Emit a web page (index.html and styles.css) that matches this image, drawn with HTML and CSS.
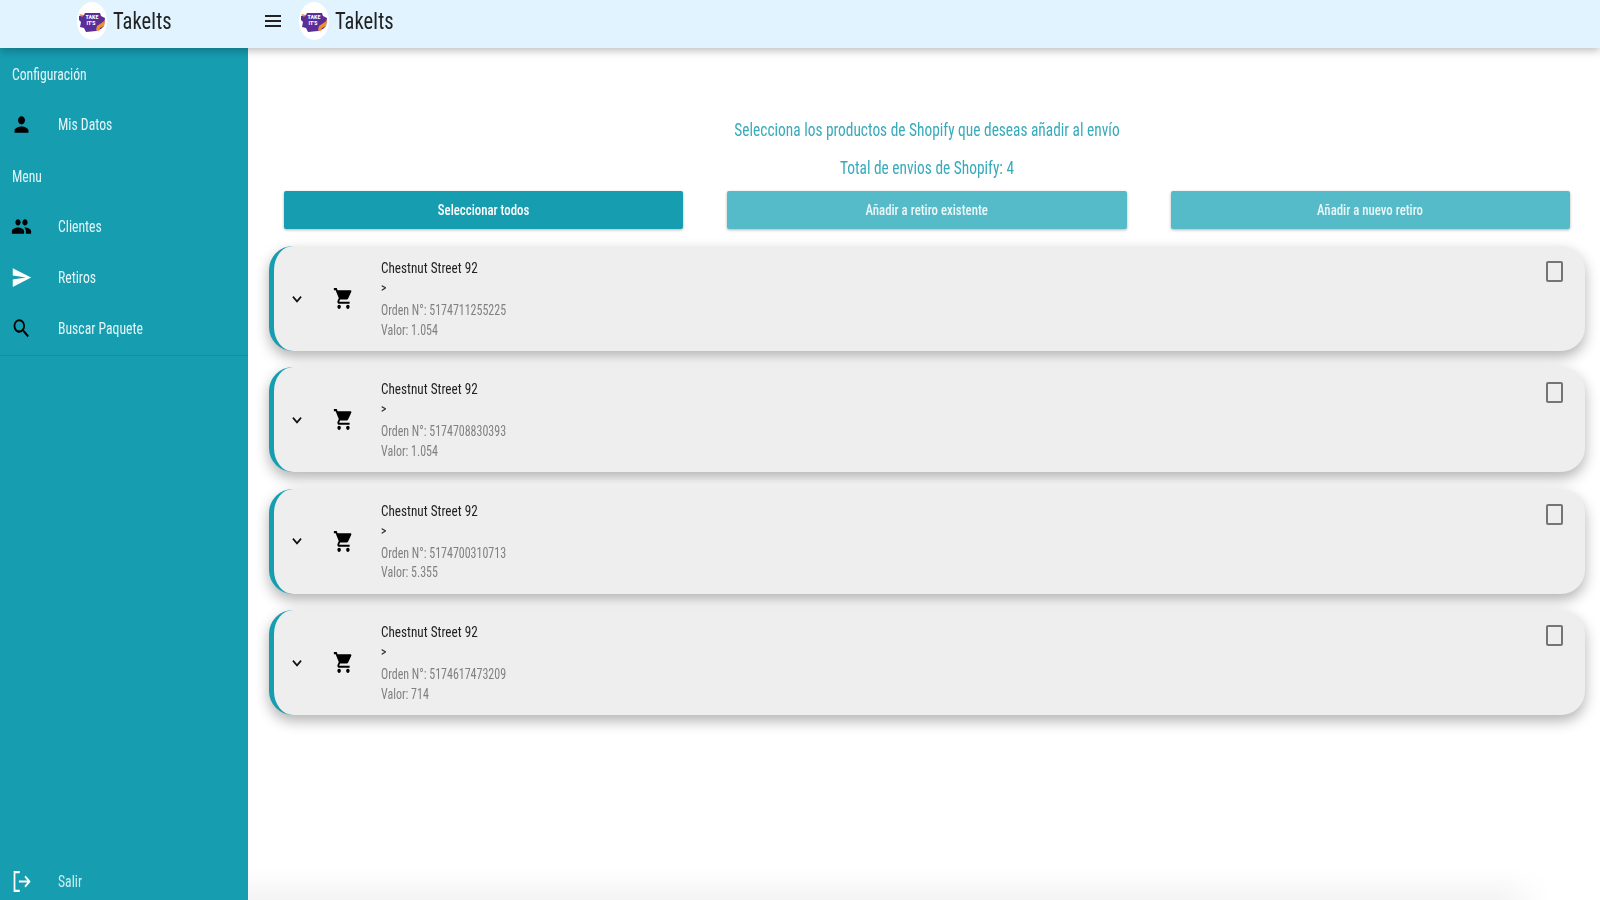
FILE: index.html
```html
<!DOCTYPE html>
<html lang="es">
<head>
  <meta charset="UTF-8" />
  <meta name="viewport" content="width=device-width, initial-scale=1.0"/>
  <title>TakeIts</title>
  <link rel="stylesheet" href="styles.css">
</head>
<body>
  <svg class="defs" width="0" height="0">
    <symbol id="person" viewBox="0 0 24 24" preserveAspectRatio="none"><path d="M12 12c2.21 0 4-1.79 4-4s-1.79-4-4-4-4 1.79-4 4 1.79 4 4 4zm0 2c-2.67 0-8 1.34-8 4v2h16v-2c0-2.66-5.33-4-8-4z"/></symbol>
    <symbol id="people" viewBox="0 0 24 24" preserveAspectRatio="none"><path d="M16 11c1.66 0 2.99-1.34 2.99-3S17.66 5 16 5c-1.66 0-3 1.34-3 3s1.34 3 3 3zm-8 0c1.66 0 2.99-1.34 2.99-3S9.66 5 8 5C6.34 5 5 6.34 5 8s1.34 3 3 3zm0 2c-2.33 0-7 1.17-7 3.5V19h14v-2.5c0-2.33-4.67-3.5-7-3.5zm8 0c-.29 0-.62.02-.97.05 1.16.84 1.97 1.97 1.97 3.45V19h6v-2.5c0-2.33-4.67-3.5-7-3.5z"/></symbol>
    <symbol id="send" viewBox="0 0 24 24" preserveAspectRatio="none"><path d="M2.01 21L23 12 2.01 3 2 10l15 2-15 2z"/></symbol>
    <symbol id="search" viewBox="0 0 24 24" preserveAspectRatio="none"><path d="M15.5 14h-.79l-.28-.27C15.41 12.59 16 11.11 16 9.5 16 5.91 13.09 3 9.5 3S3 5.91 3 9.5 5.91 16 9.5 16c1.61 0 3.09-.59 4.23-1.57l.27.28v.79l5 4.99L20.49 19l-4.99-5zm-6 0C7.01 14 5 11.99 5 9.5S7.01 5 9.5 5 14 7.01 14 9.5 11.99 14 9.5 14z"/></symbol>
    <symbol id="cart" viewBox="0 0 24 24" preserveAspectRatio="none"><path d="M7 18c-1.1 0-1.99.9-1.99 2S5.9 22 7 22s2-.9 2-2-.9-2-2-2zM1 2v2h2l3.6 7.59-1.35 2.45c-.16.28-.25.61-.25.96 0 1.1.9 2 2 2h12v-2H7.42c-.14 0-.25-.11-.25-.25l.03-.12.9-1.63h7.45c.75 0 1.41-.41 1.75-1.03l3.58-6.49c.08-.14.12-.31.12-.48 0-.55-.45-1-1-1H5.21l-.94-2H1zm16 16c-1.1 0-1.99.9-1.99 2s.89 2 1.99 2 2-.9 2-2-.9-2-2-2z"/></symbol>
    <symbol id="chevron" viewBox="0 0 24 24" preserveAspectRatio="none"><path d="M5 8.5l7 7 7-7" fill="none" stroke="currentColor" stroke-width="3"/></symbol>
  </svg>

  <header class="topbar">
    <div class="brand brand-side">
      <svg class="logo" viewBox="0 0 30 38">
        <ellipse cx="15" cy="19" rx="15" ry="19" fill="#fff"/>
        <path d="M2 14l5-1 1-2h15l1 3 4 2-1 8-3 3-5 2-10 1-2-4-4-1 1-5-2-2z" fill="#5b2d96"/>
        <path d="M20 24l6-4 2-2-1 6-4 2-1 3-3-1z" fill="#f0902a"/>
        <path d="M2 12l5 1-2 2z" fill="#f0902a"/>
        <text x="15" y="17" class="logo-text">TAKE</text>
        <text x="14" y="23" class="logo-text">IT'S</text>
      </svg>
      <span class="brand-name">TakeIts</span>
    </div>
    <div class="brand brand-main">
      <svg class="menu-icon" viewBox="0 0 16 14"><path d="M0 1h16v2H0zM0 6h16v2H0zM0 11h16v2H0z"/></svg>
      <svg class="logo" viewBox="0 0 30 38">
        <ellipse cx="15" cy="19" rx="15" ry="19" fill="#fff"/>
        <path d="M2 14l5-1 1-2h15l1 3 4 2-1 8-3 3-5 2-10 1-2-4-4-1 1-5-2-2z" fill="#5b2d96"/>
        <path d="M20 24l6-4 2-2-1 6-4 2-1 3-3-1z" fill="#f0902a"/>
        <path d="M2 12l5 1-2 2z" fill="#f0902a"/>
        <text x="15" y="17" class="logo-text">TAKE</text>
        <text x="14" y="23" class="logo-text">IT'S</text>
      </svg>
      <span class="brand-name">TakeIts</span>
    </div>
  </header>

  <div class="layout">
    <nav class="sidebar">
      <div class="nav-title"><span>Configuración</span></div>
      <a class="nav-item"><svg class="nav-icon"><use href="#person"/></svg><span>Mis Datos</span></a>
      <div class="nav-title"><span>Menu</span></div>
      <a class="nav-item"><svg class="nav-icon"><use href="#people"/></svg><span>Clientes</span></a>
      <a class="nav-item"><svg class="nav-icon nav-icon-white"><use href="#send"/></svg><span>Retiros</span></a>
      <a class="nav-item"><svg class="nav-icon"><use href="#search"/></svg><span>Buscar Paquete</span></a>
      <div class="nav-line"></div>
      <a class="nav-item nav-exit">
        <svg class="nav-icon" viewBox="0 0 24 24" preserveAspectRatio="none"><path d="M10 3H4v18h6M9 12h12M16 7l5 5-5 5" fill="none" stroke="#fff" stroke-width="2"/></svg>
        <span>Salir</span>
      </a>
    </nav>

    <main class="content">
      <p class="intro">Selecciona los productos de Shopify que deseas añadir al envío</p>
      <p class="intro intro-total">Total de envios de Shopify: 4</p>

      <div class="actions">
        <button class="btn"><span>Seleccionar todos</span></button>
        <button class="btn btn-off"><span>Añadir a retiro existente</span></button>
        <button class="btn btn-off"><span>Añadir a nuevo retiro</span></button>
      </div>

      <div class="order">
        <svg class="chevron"><use href="#chevron"/></svg>
        <svg class="cart"><use href="#cart"/></svg>
        <div class="order-info">
          <h3>Chestnut Street 92</h3>
          <h4>&gt;</h4>
          <p>Orden N°: 5174711255225</p>
          <p>Valor: 1.054</p>
        </div>
        <span class="check"></span>
      </div>

      <div class="order">
        <svg class="chevron"><use href="#chevron"/></svg>
        <svg class="cart"><use href="#cart"/></svg>
        <div class="order-info">
          <h3>Chestnut Street 92</h3>
          <h4>&gt;</h4>
          <p>Orden N°: 5174708830393</p>
          <p>Valor: 1.054</p>
        </div>
        <span class="check"></span>
      </div>

      <div class="order">
        <svg class="chevron"><use href="#chevron"/></svg>
        <svg class="cart"><use href="#cart"/></svg>
        <div class="order-info">
          <h3>Chestnut Street 92</h3>
          <h4>&gt;</h4>
          <p>Orden N°: 5174700310713</p>
          <p>Valor: 5.355</p>
        </div>
        <span class="check"></span>
      </div>

      <div class="order">
        <svg class="chevron"><use href="#chevron"/></svg>
        <svg class="cart"><use href="#cart"/></svg>
        <div class="order-info">
          <h3>Chestnut Street 92</h3>
          <h4>&gt;</h4>
          <p>Orden N°: 5174617473209</p>
          <p>Valor: 714</p>
        </div>
        <span class="check"></span>
      </div>

      <div class="bottom-fade"></div>
    </main>
  </div>
</body>
</html>
```

FILE: styles.css
```css
* {
  box-sizing: border-box;
}
html, body {
  height: 100%;
}
body {
  margin: 0;
  font-family: Roboto, "Liberation Sans", sans-serif;
  font-stretch: 75%;
  display: flex;
  flex-direction: column;
  overflow: hidden;
  background: #fff;
}
.defs {
  position: absolute;
}
.logo-text {
  font-size: 6px;
  font-weight: 700;
  fill: #fff;
  text-anchor: middle;
}

.brand-name,
.nav-title span,
.nav-item span,
.btn span,
.intro,
.order-info p {
  transform: scaleX(0.855);
}
.order-info h3,
.order-info h4 {
  transform: scaleX(0.88);
}
.brand-name,
.nav-title span,
.nav-item span,
.order-info h3,
.order-info h4,
.order-info p {
  transform-origin: left center;
}
.brand-name,
.nav-title span,
.nav-item span,
.btn span {
  display: inline-block;
}

/* top bar */
.topbar {
  height: 48px;
  flex: none;
  display: flex;
  background: #e0f3fe;
  box-shadow: 0 3px 8px rgba(0, 0, 0, 0.25);
  position: relative;
  z-index: 2;
}
.brand {
  display: flex;
  align-items: center;
  height: 41px;
}
.brand-side {
  width: 248px;
  padding-left: 77px;
}
.brand-main {
  padding-left: 17px;
}
.logo {
  width: 30px;
  height: 38px;
  margin-right: 6px;
}
.menu-icon {
  width: 16px;
  height: 14px;
  margin-right: 18px;
  fill: #222;
}
.brand-name {
  font-size: 24px;
  color: #222;
}

/* sidebar */
.layout {
  flex: 1;
  display: flex;
  min-height: 0;
}
.sidebar {
  width: 248px;
  flex: none;
  display: flex;
  flex-direction: column;
  background: #169db0;
  color: #e4f6f8;
  font-size: 16px;
}
.nav-title {
  height: 51px;
  padding: 17px 0 0 12px;
}
.nav-item {
  height: 51px;
  display: flex;
  align-items: center;
  padding-left: 11px;
}
.nav-icon {
  width: 21px;
  height: 25px;
  margin-right: 26px;
  fill: #000;
}
.nav-icon-white {
  fill: #fff;
}
.nav-line {
  height: 1px;
  margin-top: 1px;
  background: rgba(0, 0, 0, 0.08);
}
.nav-exit {
  margin-top: auto;
  height: 38px;
  color: #cdeef2;
}

/* content */
.content {
  flex: 1;
  min-width: 0;
  position: relative;
  padding: 71px 15px 0 21px;
  display: flex;
  flex-direction: column;
  color: #37aabb;
}
.intro {
  margin: 0;
  height: 38px;
  line-height: 22px;
  font-size: 18px;
  text-align: center;
}
.intro-total {
  height: 34px;
}
.actions {
  display: grid;
  grid-template-columns: repeat(3, 1fr);
  column-gap: 44px;
  padding: 0 15px;
  margin-bottom: 17px;
}
.btn {
  height: 38px;
  border: none;
  border-radius: 2px;
  background: #169db0;
  color: #fff;
  font: inherit;
  font-stretch: 75%;
  font-size: 15px;
  font-weight: 500;
  box-shadow: 0 1px 3px rgba(0, 0, 0, 0.3);
}
.btn-off {
  background: #56bbc9;
  color: #eaf7f9;
}

/* order cards */
.order {
  height: 105px;
  flex: none;
  margin-bottom: 16.4px;
  display: flex;
  align-items: center;
  position: relative;
  background: #eee;
  border-left: 5px solid #169db0;
  border-radius: 24px;
  box-shadow: 0 6px 14px rgba(0, 0, 0, 0.3);
}
.chevron {
  width: 14px;
  height: 16px;
  margin-left: 16px;
  color: #111;
}
.cart {
  width: 21px;
  height: 25px;
  margin-left: 29px;
  fill: #000;
}
.order-info {
  margin-left: 27px;
  padding-top: 1px;
}
.order-info h3 {
  margin: 0;
  font-size: 15px;
  font-weight: 400;
  line-height: 20px;
  color: #222;
}
.order-info h4 {
  margin: 0 0 3px;
  font-size: 13px;
  font-weight: 500;
  line-height: 20px;
  color: #333;
}
.order-info p {
  margin: 0;
  font-size: 14px;
  line-height: 19.5px;
  color: #808080;
}
.check {
  position: absolute;
  top: 15px;
  right: 22px;
  width: 17px;
  height: 21px;
  border: 2px solid #757575;
  border-radius: 2px;
}
.bottom-fade {
  position: absolute;
  left: 0;
  right: 50px;
  bottom: 0;
  height: 32px;
  background: linear-gradient(#fff, #f4f4f4);
  mask-image: linear-gradient(to right, #000 96%, transparent);
}
```
